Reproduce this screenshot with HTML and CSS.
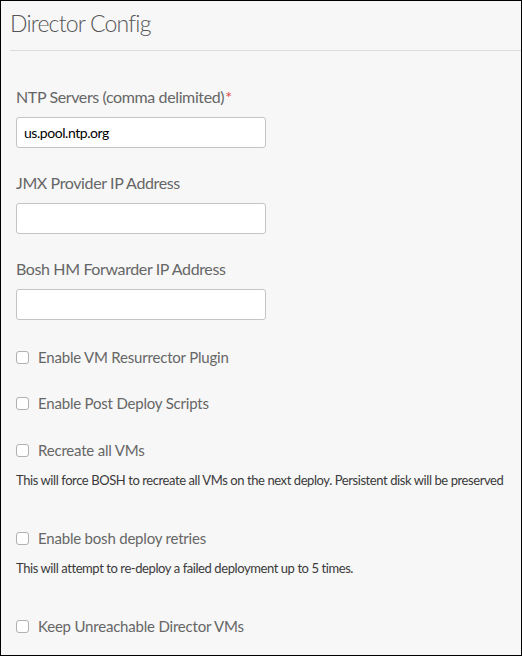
FILE: index.html
```html
<!DOCTYPE html>
<html>
<head>
<meta charset="utf-8">
<link rel="stylesheet" href="styles.css">
</head>
<body>
<div class="frame">
  <div class="header"><h1 class="title">Director Config</h1></div>
  <form class="form">
    <div class="field first">
      <label class="label">NTP Servers (comma delimited)<span class="req">*</span></label>
      <input class="text" type="text" value="us.pool.ntp.org">
    </div>
    <div class="field">
      <label class="label">JMX Provider IP Address</label>
      <input class="text" type="text" value="">
    </div>
    <div class="field">
      <label class="label">Bosh HM Forwarder IP Address</label>
      <input class="text" type="text" value="">
    </div>
    <label class="check lead"><input type="checkbox" class="box"><span>Enable VM Resurrector Plugin</span></label>
    <label class="check"><input type="checkbox" class="box"><span>Enable Post Deploy Scripts</span></label>
    <label class="check lead"><input type="checkbox" class="box"><span>Recreate all VMs</span></label>
    <p class="help">This will force BOSH to recreate all VMs on the next deploy. Persistent disk will be preserved</p>
    <label class="check far"><input type="checkbox" class="box"><span>Enable bosh deploy retries</span></label>
    <p class="help">This will attempt to re-deploy a failed deployment up to 5 times.</p>
    <label class="check far"><input type="checkbox" class="box"><span>Keep Unreachable Director VMs</span></label>
  </form>
</div>
</body>
</html>
```

FILE: styles.css
```css
html, body { margin: 0; padding: 0; }
body { font-family: Lato, "Open Sans", sans-serif; }
.frame {
  box-sizing: border-box;
  width: 522px;
  height: 656px;
  border: 1px solid #000;
  background: #f7f7f7;
  overflow: hidden;
}
.header {
  margin-left: 9px;
  height: 49px;
  border-bottom: 1px solid #dcdcdc;
}
.title {
  margin: 0;
  padding-top: 7px;
  font-size: 23px;
  line-height: 30px;
  font-weight: 300;
  letter-spacing: -0.8px;
  color: #555;
}
.form {
  padding: 0 15px;
  display: flex;
  flex-direction: column;
  align-items: flex-start;
}
.field { display: flex; flex-direction: column; margin-top: 25px; }
.field.first { margin-top: 36px; }
.label {
  font-size: 16px;
  line-height: 20px;
  letter-spacing: -0.38px;
  color: #666;
  margin-bottom: 10px;
}
.req { color: #e0463c; margin-left: 1px; }
.text {
  box-sizing: border-box;
  width: 250px;
  height: 31px;
  margin: 0;
  padding: 0 7px;
  border: 1px solid #c4c4c4;
  border-radius: 3px;
  background: #fff;
  font-family: Lato, sans-serif;
  font-size: 14px;
  letter-spacing: -0.45px;
  color: #000;
  outline: none;
}
.check {
  display: flex;
  align-items: center;
  margin-top: 26px;
  height: 20px;
  font-size: 15px;
  letter-spacing: -0.2px;
  color: #666;
}
.check.lead { margin-top: 27px; }
.check.far { margin-top: 40px; }
.box {
  appearance: none;
  -webkit-appearance: none;
  box-sizing: border-box;
  width: 13px;
  height: 13px;
  margin: 0 9px 0 0;
  border: 1px solid #b0b0b0;
  border-radius: 3px;
  background: #fff;
}
.help {
  margin: 12px 0 0;
  font-size: 13px;
  line-height: 16px;
  letter-spacing: -0.42px;
  color: #3a3a3a;
  white-space: nowrap;
}
```
